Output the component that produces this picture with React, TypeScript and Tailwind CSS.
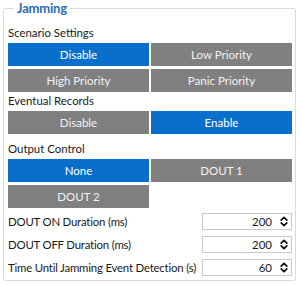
import React from 'react';

const font = { fontFamily: 'Lato, "Open Sans", sans-serif' };

interface OptionGridProps {
  options: string[];
  active: string;
}

const OptionGrid = ({ options, active }: OptionGridProps) => (
  <div className="mt-[2px] grid grid-cols-2 gap-x-[2px] gap-y-[3px]">
    {options.map((opt) => (
      <div
        key={opt}
        className={
          'flex h-[23px] items-center justify-center text-[11.5px] ' +
          (opt === active ? 'bg-[#0a6fca] text-white' : 'bg-[#808080] text-[#f2f2f2]')
        }
      >
        {opt}
      </div>
    ))}
  </div>
);

const Spinner = () => (
  <svg width="8" height="11" viewBox="0 0 8 11" fill="none" stroke="#111" strokeWidth="1.7" strokeLinecap="round" strokeLinejoin="round">
    <path d="M1.2 4.2 L4 1.4 L6.8 4.2" />
    <path d="M1.2 6.8 L4 9.6 L6.8 6.8" />
  </svg>
);

interface NumberRowProps {
  label: string;
  value: number;
}

const NumberRow = ({ label, value }: NumberRowProps) => (
  <div className="flex h-[23px] items-center justify-between gap-0">
    <span className="whitespace-nowrap text-[11.4px] tracking-[-0.2px] text-[#1a1a1a]">{label}</span>
    <div className="flex h-[17px] w-[90px] shrink-0 items-center justify-end border border-[#c9c9c9] bg-white pr-[3px]">
      <span className="mr-[8px] text-[11.5px] text-[#1a1a1a]">{value}</span>
      <Spinner />
    </div>
  </div>
);

export default function App() {
  return (
    <div className="h-[285px] w-[300px] bg-white pl-[3px] pr-[4px] pt-px" style={font}>
      <fieldset className="min-w-0 rounded-[2px] border border-[#dadada] pl-[4px] pr-[3px] pb-[1px]">
        <legend className="ml-[6px] px-[3px] text-[13px] font-bold leading-[14px] tracking-[-0.2px] text-[#2a6cb3]">Jamming</legend>

        <div className="mt-[10px] h-4 text-[11.4px] leading-4 text-[#1a1a1a]">Scenario Settings</div>
        <OptionGrid options={['Disable', 'Low Priority', 'High Priority', 'Panic Priority']} active="Disable" />

        <div className="mt-[1px] h-4 text-[11.4px] leading-4 text-[#1a1a1a]">Eventual Records</div>
        <OptionGrid options={['Disable', 'Enable']} active="Enable" />

        <div className="mt-[7px] h-4 text-[11.4px] leading-4 text-[#1a1a1a]">Output Control</div>
        <OptionGrid options={['None', 'DOUT 1', 'DOUT 2']} active="None" />

        <div className="mt-[2px]">
          <NumberRow label="DOUT ON Duration (ms)" value={200} />
          <NumberRow label="DOUT OFF Duration (ms)" value={200} />
          <NumberRow label="Time Until Jamming Event Detection (s)" value={60} />
        </div>
      </fieldset>
    </div>
  );
}
